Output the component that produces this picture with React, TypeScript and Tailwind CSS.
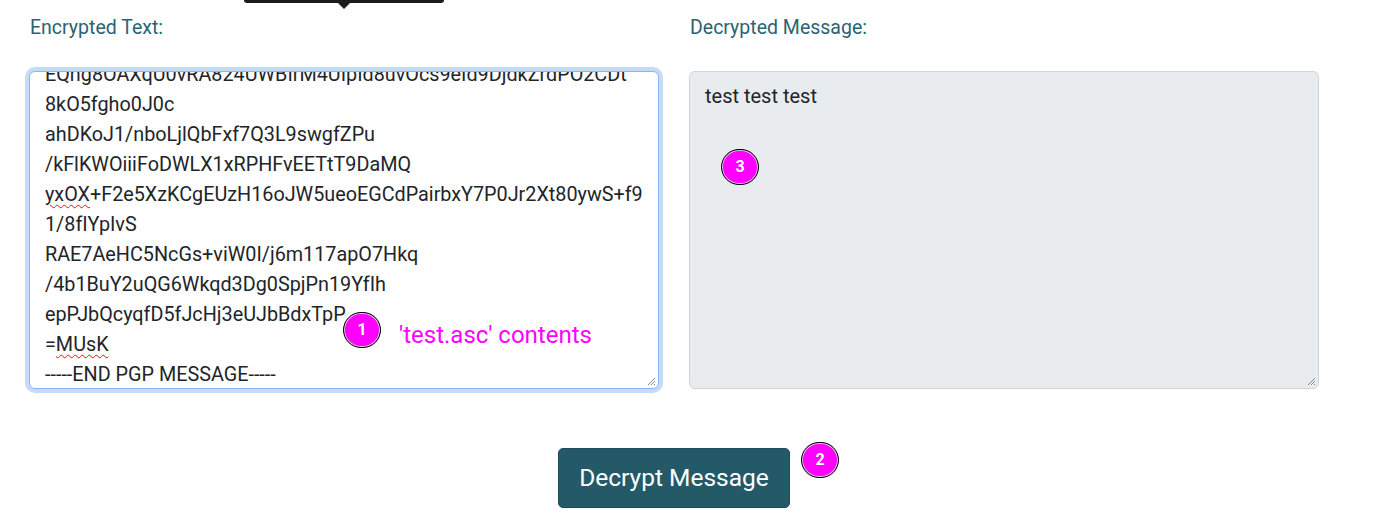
import React from "react";

const lines = [
  "EQng8OAXqU0vRA824UWBIrM4UIpId8uvOcs9eId9DjdkZrdPO2CDt",
  "8kO5fgho0J0c",
  "ahDKoJ1/nboLjlQbFxf7Q3L9swgfZPu",
  "/kFlKWOiiiFoDWLX1xRPHFvEETtT9DaMQ",
];

function Grip() {
  return (
    <svg className="absolute right-[2px] bottom-[2px]" width="9" height="9" viewBox="0 0 9 9">
      <path d="M8 1 L1 8 M8 4 L4 8 M8 7 L7 8" stroke="#8a8a8a" strokeWidth="1" fill="none" />
    </svg>
  );
}

function Badge({ n, className }: { n: string; className: string }) {
  return (
    <div
      className={
        "absolute w-[38px] h-[36px] rounded-full bg-[#ff00ff] border border-black shadow-[0_0_0_1px_#d0d0d0_inset] flex items-center justify-center text-white font-bold text-[16px] " +
        className
      }
    >
      {n}
    </div>
  );
}

export default function App() {
  return (
    <div className="relative w-[1379px] h-[531px] overflow-hidden bg-white font-['Roboto',sans-serif] text-[#212529]">
      {/* tooltip remnant */}
      <div className="absolute top-0 left-[244px] w-[200px] h-[3px] bg-[#1b1b1b] rounded-b-[4px]" />
      <div className="absolute top-[3px] left-[338px] w-0 h-0 border-l-[6px] border-r-[6px] border-t-[6px] border-l-transparent border-r-transparent border-t-[#1b1b1b]" />

      <div className="ml-[29px] w-[1290px] pt-[16px]">
        <div className="flex gap-[30px]">
          <div className="w-[630px]">
            <div className="h-[24px] leading-[24px] text-[19.5px] text-[#2b6372] pl-[1px]">Encrypted Text:</div>
            <div className="mt-[31px] relative h-[318px] rounded-[6px] border border-[#86b7fe] shadow-[0_0_0_4px_#c5dbf8] bg-white overflow-hidden">
              <div className="-mt-[12px] pl-[15px] text-[19.8px] leading-[30px] whitespace-pre">
                {lines.map((l) => (
                  <div key={l}>{l}</div>
                ))}
                <div>
                  <span className="underline decoration-wavy decoration-[#e01010] decoration-1 underline-offset-[3px]">yxOX</span>
                  +F2e5XzKCgEUzH16oJW5ueoEGCdPairbxY7P0Jr2Xt80ywS+f9
                </div>
                <div>1/8fIYpIvS</div>
                <div>RAE7AeHC5NcGs+viW0I/j6m117apO7Hkq</div>
                <div>/4b1BuY2uQG6Wkqd3Dg0SpjPn19YfIh</div>
                <div>epPJbQcyqfD5fJcHj3eUJbBdxTpP</div>
                <div>
                  =<span className="underline decoration-wavy decoration-[#e01010] decoration-1 underline-offset-[3px]">MUsK</span>
                </div>
                <div>-----END PGP MESSAGE-----</div>
              </div>
              <Grip />
            </div>
          </div>
          <div className="w-[630px]">
            <div className="h-[24px] leading-[24px] text-[19.5px] text-[#2b6372] pl-[1px]">Decrypted Message:</div>
            <div className="mt-[31px] relative h-[318px] rounded-[6px] border border-[#ced4da] bg-[#e9ecef] overflow-hidden">
              <div className="pt-[9px] pl-[15px] text-[20px] leading-[30px]">test test test</div>
              <Grip />
            </div>
          </div>
        </div>
        <div className="flex justify-center mt-[59px]">
          <button className="w-[232px] h-[60px] rounded-[5px] bg-[#245a67] text-white text-[24.5px] border border-[#1e4c58]">
            Decrypt Message
          </button>
        </div>
      </div>

      <Badge n="1" className="left-[343px] top-[312px]" />
      <div className="absolute left-[399px] top-[320px] text-[24px] leading-[30px] text-[#ff00ff]">'test.asc' contents</div>
      <Badge n="3" className="left-[721px] top-[149px]" />
      <Badge n="2" className="left-[801px] top-[442px]" />
    </div>
  );
}
